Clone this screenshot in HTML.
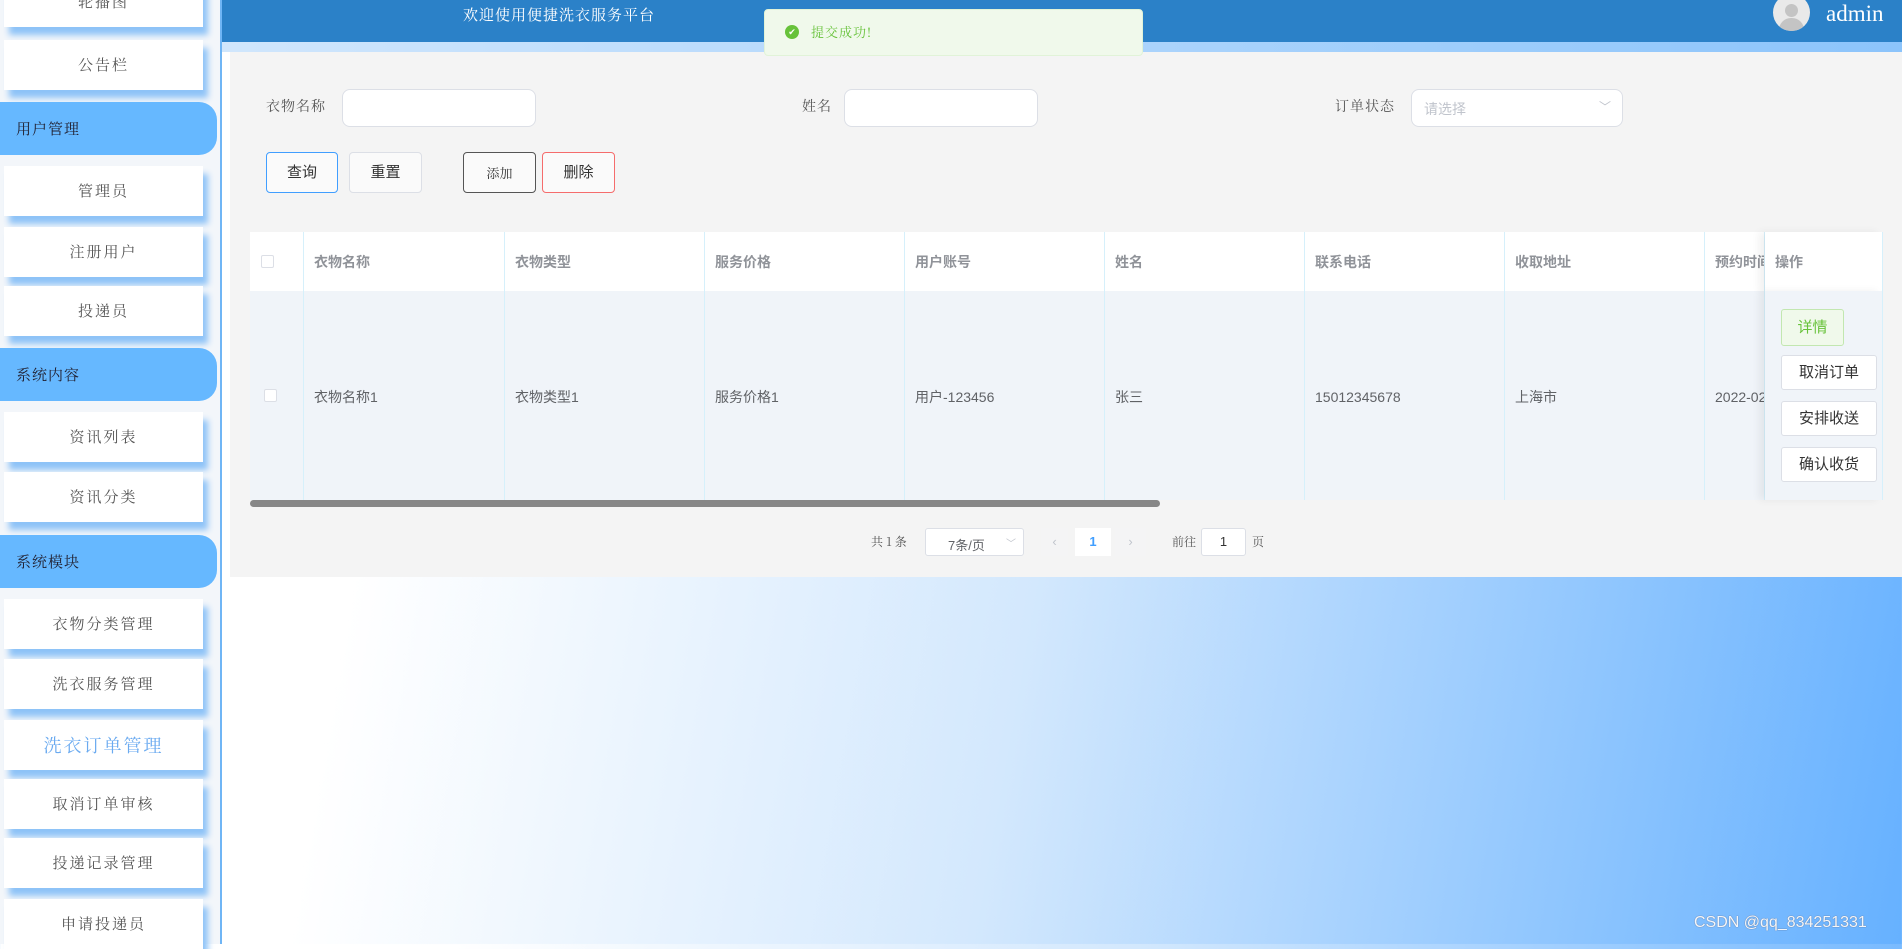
<!DOCTYPE html>
<html><head><meta charset="utf-8"><style>
*{box-sizing:border-box;margin:0;padding:0}
body{width:1902px;height:944px;overflow:hidden;position:relative;font-family:"Liberation Sans","Noto Sans CJK SC",sans-serif;background:linear-gradient(100deg,#ffffff 22%,#d3e8fd 55%,#66b1ff 100%)}
.abs{position:absolute}
#side{left:0;top:0;width:222px;height:944px;background:#f3f6fa;border-right:2px solid #6fb5f5}
.it{position:absolute;left:4px;width:199px;height:50px;background:#fff;box-shadow:5px 8px 6px #8ec3f7;text-align:center;line-height:50px;font-family:"Noto Serif CJK SC",serif;font-size:15px;color:#555;letter-spacing:2px}
.grp{position:absolute;left:0;width:217px;height:53px;background:#66b8ff;border-radius:0 18px 18px 0;line-height:53px;padding-left:16px;font-family:"Noto Serif CJK SC",serif;font-size:15px;color:#223;letter-spacing:1px}
#hdr{left:222px;top:0;width:1680px;height:42px;background:#2b81c8}
#band{left:222px;top:42px;width:1680px;height:10px;background:linear-gradient(90deg,#d0e6fc,#8cc4fb)}
#main{left:230px;top:52px;width:1672px;height:525px;background:#f4f4f4}
.lbl{position:absolute;font-family:"Noto Serif CJK SC",serif;font-size:14px;color:#555;letter-spacing:1px}
.inp{position:absolute;height:38px;background:#fff;border:1px solid #dcdfe6;border-radius:8px}
.btn{position:absolute;height:41px;border:1px solid #dcdfe6;border-radius:4px;background:#fafafa;text-align:center;line-height:39px;font-size:15px;color:#333}
.th,.td{position:absolute;border-right:1px solid #d6f0fb;font-size:14px;padding-left:10px}
.th{top:232px;height:59px;line-height:61px;background:#fff;color:#909399;font-weight:bold}
.td{top:291px;height:209px;line-height:212px;background:#f0f4f9;color:#606266}
.ab{position:absolute;left:1781px;width:96px;height:35px;background:#fff;border:1px solid #dcdfe6;border-radius:3px;text-align:center;line-height:33px;font-size:15px;color:#333}
</style></head><body>
<div id="side" class="abs">
<div class="it" style="top:-23px">轮播图</div>
<div class="it" style="top:40px">公告栏</div>
<div class="grp" style="top:102px">用户管理</div>
<div class="it" style="top:166px">管理员</div>
<div class="it" style="top:227px">注册用户</div>
<div class="it" style="top:286px">投递员</div>
<div class="grp" style="top:348px">系统内容</div>
<div class="it" style="top:412px">资讯列表</div>
<div class="it" style="top:472px">资讯分类</div>
<div class="grp" style="top:535px">系统模块</div>
<div class="it" style="top:599px">衣物分类管理</div>
<div class="it" style="top:659px">洗衣服务管理</div>
<div class="it" style="top:720px;color:#6aaaf0;font-size:18px">洗衣订单管理</div>
<div class="it" style="top:779px">取消订单审核</div>
<div class="it" style="top:838px">投递记录管理</div>
<div class="it" style="top:899px">申请投递员</div>
</div>
<div id="hdr" class="abs"></div>
<div class="abs" style="left:463px;top:4px;color:#fff;font-family:'Noto Serif CJK SC',serif;font-size:15px;letter-spacing:1px">欢迎使用便捷洗衣服务平台</div>
<div class="abs" style="left:1773px;top:-6px;width:37px;height:37px;border-radius:50%;background:#e9e9e9;overflow:hidden"><div class="abs" style="left:12px;top:10px;width:13px;height:13px;border-radius:50%;background:#c4c4c4"></div><div class="abs" style="left:6px;top:24px;width:25px;height:16px;border-radius:12px 12px 0 0;background:#c4c4c4"></div></div>
<div class="abs" style="left:1826px;top:1px;color:#fff;font-family:'Liberation Serif',serif;font-size:23px">admin</div>
<div id="band" class="abs"></div>
<div id="main" class="abs"></div>
<div class="abs" style="left:764px;top:9px;width:379px;height:47px;background:#f0f9eb;border:1px solid #e1f3d8;border-radius:4px"></div>
<div class="abs" style="left:785px;top:25px;width:14px;height:14px;border-radius:50%;background:#67c23a;color:#fff;font-size:9px;text-align:center;line-height:14px">✔</div>
<div class="abs" style="left:811px;top:22px;color:#67c23a;font-family:'Noto Serif CJK SC',serif;font-size:13px;letter-spacing:1px">提交成功!</div>

<div class="lbl" style="left:266px;top:96px">衣物名称</div>
<div class="inp" style="left:342px;top:89px;width:194px"></div>
<div class="lbl" style="left:802px;top:96px">姓名</div>
<div class="inp" style="left:844px;top:89px;width:194px"></div>
<div class="lbl" style="left:1335px;top:96px">订单状态</div>
<div class="inp" style="left:1411px;top:89px;width:212px"><span class="abs" style="left:12px;top:9px;font-size:14px;color:#c0c4cc">请选择</span><span class="abs" style="left:187px;top:8px;font-size:12px;color:#c0c4cc">﹀</span></div>

<div class="btn" style="left:266px;top:152px;width:72px;border-color:#409eff">查询</div>
<div class="btn" style="left:349px;top:152px;width:73px">重置</div>
<div class="btn" style="left:463px;top:152px;width:73px;border-color:#555;font-family:'Noto Serif CJK SC',serif;font-size:13px">添加</div>
<div class="btn" style="left:542px;top:152px;width:73px;border-color:#f56c6c">删除</div>

<div class="abs" style="left:250px;top:232px;width:1633px;height:268px;border:1px solid #d6f0fb"></div>
<div class="th" style="left:250px;width:54px"><span class="abs" style="left:11px;top:23px;width:13px;height:13px;border:1px solid #dcdfe6;border-radius:2px;background:#fff"></span></div>
<div class="td" style="left:250px;width:54px;background:#f0f4f9"><span class="abs" style="left:14px;top:98px;width:13px;height:13px;border:1px solid #dcdfe6;border-radius:2px;background:#fff"></span></div>
<div class="th" style="left:304px;width:201px">衣物名称</div><div class="td" style="left:304px;width:201px">衣物名称1</div>
<div class="th" style="left:505px;width:200px">衣物类型</div><div class="td" style="left:505px;width:200px">衣物类型1</div>
<div class="th" style="left:705px;width:200px">服务价格</div><div class="td" style="left:705px;width:200px">服务价格1</div>
<div class="th" style="left:905px;width:200px">用户账号</div><div class="td" style="left:905px;width:200px">用户-123456</div>
<div class="th" style="left:1105px;width:200px">姓名</div><div class="td" style="left:1105px;width:200px">张三</div>
<div class="th" style="left:1305px;width:200px">联系电话</div><div class="td" style="left:1305px;width:200px">15012345678</div>
<div class="th" style="left:1505px;width:200px">收取地址</div><div class="td" style="left:1505px;width:200px">上海市</div>
<div class="th" style="left:1705px;width:60px;overflow:hidden;white-space:nowrap">预约时间</div><div class="td" style="left:1705px;width:60px;overflow:hidden;white-space:nowrap">2022-02</div>
<div class="th" style="left:1765px;width:118px;box-shadow:-6px 0 8px rgba(0,0,0,.06)">操作</div>
<div class="td" style="left:1765px;width:118px;box-shadow:-6px 0 8px rgba(0,0,0,.06)"></div>
<div class="ab" style="top:309px;width:63px;height:37px;line-height:35px;background:#f0f9eb;border-color:#c2e7b0;color:#67c23a">详情</div>
<div class="ab" style="top:355px">取消订单</div>
<div class="ab" style="top:401px">安排收送</div>
<div class="ab" style="top:447px">确认收货</div>
<div class="abs" style="left:250px;top:500px;width:910px;height:7px;background:#878787;border-radius:4px"></div>

<div class="abs" style="left:871px;top:533px;font-family:'Noto Serif CJK SC',serif;font-size:12px;color:#555">共 1 条</div>
<div class="abs" style="left:925px;top:528px;width:99px;height:28px;background:#fff;border:1px solid #dcdfe6;border-radius:3px;font-size:13px;color:#606266"><span class="abs" style="left:22px;top:6px">7条/页</span><span class="abs" style="left:80px;top:6px;font-size:10px;color:#c0c4cc">﹀</span></div>
<div class="abs" style="left:1041px;top:528px;width:27px;height:28px;background:#f4f4f5;color:#c0c4cc;text-align:center;line-height:28px;font-size:13px">‹</div>
<div class="abs" style="left:1075px;top:528px;width:36px;height:28px;background:#fff;color:#409eff;text-align:center;line-height:28px;font-size:13px;font-weight:bold">1</div>
<div class="abs" style="left:1115px;top:528px;width:31px;height:28px;background:#f4f4f5;color:#c0c4cc;text-align:center;line-height:28px;font-size:13px">›</div>
<div class="abs" style="left:1172px;top:533px;font-family:'Noto Serif CJK SC',serif;font-size:12px;color:#555">前往</div>
<div class="abs" style="left:1201px;top:528px;width:45px;height:28px;background:#fff;border:1px solid #dcdfe6;border-radius:3px;text-align:center;line-height:26px;font-size:13px;color:#333">1</div>
<div class="abs" style="left:1252px;top:533px;font-family:'Noto Serif CJK SC',serif;font-size:12px;color:#555">页</div>

<div class="abs" style="left:1694px;top:914px;font-size:16px;color:#f4f6fa;text-shadow:0 0 1px #556">CSDN @qq_834251331</div>
</body></html>
